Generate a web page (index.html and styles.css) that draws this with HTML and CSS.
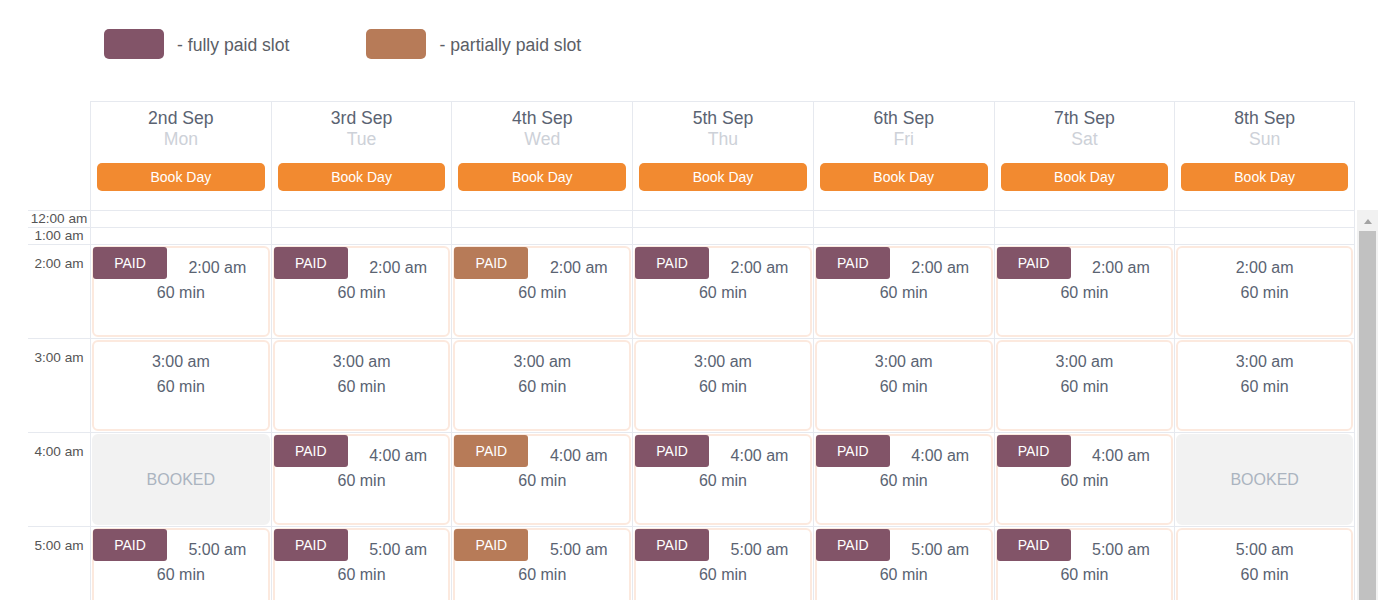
FILE: index.html
```html
<!DOCTYPE html>
<html lang="en">
<head>
    <meta charset="UTF-8">
    <meta name="viewport" content="width=device-width,initial-scale=1.0" />
    <title>Slots</title>
    <link rel="stylesheet" href="styles.css">
</head>
<body>
  <div class="legend">
    <div class="legend-item"><span class="swatch full"></span><span class="ltext">- fully paid slot</span></div>
    <div class="legend-item"><span class="swatch part"></span><span class="ltext">- partially paid slot</span></div>
  </div>

  <div class="days">
    <div class="corner"></div>
    <div class="day"><div class="date">2nd Sep</div><div class="dname">Mon</div><div class="bookday">Book Day</div></div>
    <div class="day"><div class="date">3rd Sep</div><div class="dname">Tue</div><div class="bookday">Book Day</div></div>
    <div class="day"><div class="date">4th Sep</div><div class="dname">Wed</div><div class="bookday">Book Day</div></div>
    <div class="day"><div class="date">5th Sep</div><div class="dname">Thu</div><div class="bookday">Book Day</div></div>
    <div class="day"><div class="date">6th Sep</div><div class="dname">Fri</div><div class="bookday">Book Day</div></div>
    <div class="day"><div class="date">7th Sep</div><div class="dname">Sat</div><div class="bookday">Book Day</div></div>
    <div class="day last"><div class="date">8th Sep</div><div class="dname">Sun</div><div class="bookday">Book Day</div></div>
  </div>

  <div class="bodywrap">
    <div class="grid">
      <!-- empty hours -->
      <div class="row small">
        <div class="hour">12:00 am</div>
        <div class="cell"></div><div class="cell"></div><div class="cell"></div><div class="cell"></div>
        <div class="cell"></div><div class="cell"></div><div class="cell last"></div>
      </div>
      <div class="row small">
        <div class="hour">1:00 am</div>
        <div class="cell"></div><div class="cell"></div><div class="cell"></div><div class="cell"></div>
        <div class="cell"></div><div class="cell"></div><div class="cell last"></div>
      </div>

      <!-- 2am -->
      <div class="row">
        <div class="hour">2:00 am</div>
        <div class="cell"><div class="slot"><span class="tag full">PAID</span>2:00 am<br>60 min</div></div>
        <div class="cell"><div class="slot"><span class="tag full">PAID</span>2:00 am<br>60 min</div></div>
        <div class="cell"><div class="slot"><span class="tag part">PAID</span>2:00 am<br>60 min</div></div>
        <div class="cell"><div class="slot"><span class="tag full">PAID</span>2:00 am<br>60 min</div></div>
        <div class="cell"><div class="slot"><span class="tag full">PAID</span>2:00 am<br>60 min</div></div>
        <div class="cell"><div class="slot"><span class="tag full">PAID</span>2:00 am<br>60 min</div></div>
        <div class="cell last"><div class="slot">2:00 am<br>60 min</div></div>
      </div>

      <!-- 3am -->
      <div class="row">
        <div class="hour">3:00 am</div>
        <div class="cell"><div class="slot">3:00 am<br>60 min</div></div>
        <div class="cell"><div class="slot">3:00 am<br>60 min</div></div>
        <div class="cell"><div class="slot">3:00 am<br>60 min</div></div>
        <div class="cell"><div class="slot">3:00 am<br>60 min</div></div>
        <div class="cell"><div class="slot">3:00 am<br>60 min</div></div>
        <div class="cell"><div class="slot">3:00 am<br>60 min</div></div>
        <div class="cell last"><div class="slot">3:00 am<br>60 min</div></div>
      </div>

      <!-- 4am -->
      <div class="row">
        <div class="hour">4:00 am</div>
        <div class="cell"><div class="slot booked">BOOKED</div></div>
        <div class="cell"><div class="slot"><span class="tag full">PAID</span>4:00 am<br>60 min</div></div>
        <div class="cell"><div class="slot"><span class="tag part">PAID</span>4:00 am<br>60 min</div></div>
        <div class="cell"><div class="slot"><span class="tag full">PAID</span>4:00 am<br>60 min</div></div>
        <div class="cell"><div class="slot"><span class="tag full">PAID</span>4:00 am<br>60 min</div></div>
        <div class="cell"><div class="slot"><span class="tag full">PAID</span>4:00 am<br>60 min</div></div>
        <div class="cell last"><div class="slot booked">BOOKED</div></div>
      </div>

      <!-- 5am -->
      <div class="row">
        <div class="hour">5:00 am</div>
        <div class="cell"><div class="slot"><span class="tag full">PAID</span>5:00 am<br>60 min</div></div>
        <div class="cell"><div class="slot"><span class="tag full">PAID</span>5:00 am<br>60 min</div></div>
        <div class="cell"><div class="slot"><span class="tag part">PAID</span>5:00 am<br>60 min</div></div>
        <div class="cell"><div class="slot"><span class="tag full">PAID</span>5:00 am<br>60 min</div></div>
        <div class="cell"><div class="slot"><span class="tag full">PAID</span>5:00 am<br>60 min</div></div>
        <div class="cell"><div class="slot"><span class="tag full">PAID</span>5:00 am<br>60 min</div></div>
        <div class="cell last"><div class="slot">5:00 am<br>60 min</div></div>
      </div>
    </div>

    <!-- scrollbar of the hours list -->
    <div class="scrollbar">
      <div class="sb-up"><span class="arrow"></span></div>
      <div class="sb-thumb"></div>
    </div>
  </div>
</body>
</html>
```

FILE: styles.css
```css
html,body,div,span{margin:0;padding:0;}
html,body{
  font-family: "Liberation Sans", Arial, sans-serif;
  background-color: #fff;
  overflow: hidden;
  height: 100%;
}
*{box-sizing: border-box;}

/* legend */
.legend{
  display: flex;
  padding: 29px 0 0 104px;
  height: 59px;
}
.legend-item{
  display: flex;
  align-items: center;
  font-size: 17.6px;
  color: #5b5e66;
  margin-right: 77px;
}
.ltext{
  padding-top: 2px;
}
.swatch{
  display: inline-block;
  width: 60px;
  height: 30px;
  border-radius: 5px;
  margin-right: 13px;
}
.swatch.full{ background: #825468; }
.swatch.part{ background: #b77b58; }

/* day header */
.days{
  display: grid;
  grid-template-columns: 90px repeat(7, 1fr);
  width: 1355px;
  margin-top: 42px;
}
.day{
  border-top: 1px solid #e6e9ef;
  border-left: 1px solid #e6e9ef;
  text-align: center;
  padding: 6px 6px 19px 6px;
}
.day.last{ border-right: 1px solid #e6e9ef; }
.date{
  font-size: 17.6px;
  line-height: 21px;
  color: #5a6372;
}
.dname{
  font-size: 17.6px;
  line-height: 21px;
  color: #cdd1d8;
}
.bookday{
  margin-top: 13px;
  height: 28px;
  line-height: 28px;
  font-size: 14px;
  color: #fff;
  background-color: #f28a30;
  border-radius: 5px;
}

/* hours list */
.bodywrap{
  display: flex;
  height: 480px;
  overflow: hidden;
}
.grid{
  width: 1327px;
  margin-left: 28px;
  border-top: 1px solid #e6e9ef;
  align-self: flex-start;
}
.row{
  display: grid;
  grid-template-columns: 62px repeat(7, 1fr);
  height: 94px;
  border-bottom: 1px solid #e6e9ef;
}
.row.small{ height: 17px; }
.hour{
  text-align: center;
  font-size: 13.6px;
  line-height: 16px;
  color: #555;
  padding-top: 11px;
}
.row.small .hour{ padding-top: 0; }
.cell{
  border-left: 1px solid #e6e9ef;
  padding: 1px;
}
.cell.last{ border-right: 1px solid #e6e9ef; }
.slot{
  height: 100%;
  border: 2px solid #fce9de;
  border-radius: 6px;
  padding-top: 7px;
  text-align: center;
  font-size: 16px;
  line-height: 25px;
  color: #5a6372;
}
.tag{
  float: left;
  width: 74px;
  height: 32px;
  line-height: 32px;
  margin: -8px 0 0 -1px;
  border-radius: 3px;
  font-size: 14px;
  color: #fff;
}
.tag.full{ background: #825468; }
.tag.part{ background: #b77b58; }
.slot.booked{
  display: flex;
  align-items: center;
  justify-content: center;
  padding: 0;
  background: #f2f2f2;
  border-color: #f2f2f2;
  color: #abb4c0;
}

.scrollbar{
  width: 21px;
  margin-left: 2px;
  background: #f1f1f1;
}
.sb-up{
  height: 21px;
  display: flex;
  justify-content: center;
  padding-top: 9px;
}
.arrow{
  width: 0;
  height: 0;
  border-left: 4.5px solid transparent;
  border-right: 4.5px solid transparent;
  border-bottom: 5px solid #a3a3a3;
}
.sb-thumb{
  height: 420px;
  margin: 0 2px;
  background: #c1c1c1;
}
```
